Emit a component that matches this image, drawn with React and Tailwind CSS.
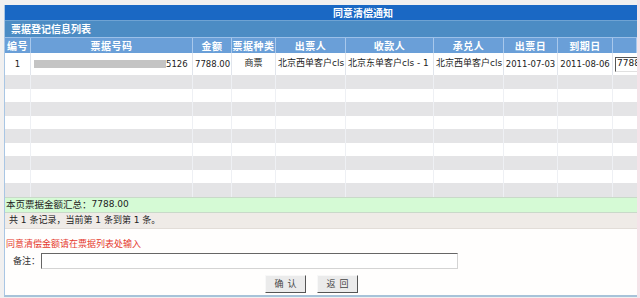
import React from "react";

const cols = "grid grid-cols-[26px_162px_39px_44px_70px_88px_70px_54px_55px_24px]";
const heads = ["编号", "票据号码", "金额", "票据种类", "出票人", "收款人", "承兑人", "出票日", "到期日", ""];

const App = () => {
  const emptyRows = Array.from({ length: 9 }, (_, i) => i);

  return (
    <div className="w-[640px] h-[298px] bg-[#f1f0f0] flex overflow-hidden font-['DejaVu_Sans','Noto_Sans_CJK_SC',sans-serif]">
      <div className="w-[4px]" />
      <div className="mt-[5px] w-[633px] h-[292px] flex flex-col bg-white border-l border-[#a9c6e4] border-b-2 border-b-[#a7c3d9]">
        <div className="h-[15px] bg-[#1a68c4] flex items-center pl-[328px] text-white text-[10px] font-bold font-['Noto_Sans_CJK_SC',sans-serif] leading-none">
          同意清偿通知
        </div>
        <div className="h-[17px] bg-[#4c8cc4] flex items-center pl-[6px] text-white text-[10px] font-bold font-['Noto_Sans_CJK_SC',sans-serif] leading-none border-t border-[#6fa3d3]">
          票据登记信息列表
        </div>
        <div className="overflow-hidden">
          <div className={`${cols} h-[16px] bg-[#6a9fd8] text-white text-[10px] font-bold font-['Noto_Sans_CJK_SC',sans-serif] border-t border-[#9cc0e8]`}>
            {heads.map((h, i) => (
              <div key={i} className="flex items-center justify-center border-r border-[#a8c8ec] leading-none tracking-[0.5px]">
                {h}
              </div>
            ))}
          </div>
          <div className={`${cols} h-[22px] bg-white text-[8.5px] text-[#222]`}>
            <div className="flex items-center justify-center border-r border-[#e1e5ec]">1</div>
            <div className="flex items-center pl-[3px] border-r border-[#e1e5ec]">
              <div className="w-[132px] h-[8px] bg-[#c4c4c4]" />
              <span>5126</span>
            </div>
            <div className="flex items-center pl-[2px] border-r border-[#e1e5ec]">7788.00</div>
            <div className="flex items-center justify-center border-r border-[#e1e5ec] text-[9px]">商票</div>
            <div className="flex items-center pl-[2px] border-r border-[#e1e5ec] text-[9px] whitespace-nowrap">北京西单客户cls</div>
            <div className="flex items-center pl-[2px] border-r border-[#e1e5ec] text-[9px] whitespace-nowrap">北京东单客户cls - 1</div>
            <div className="flex items-center pl-[2px] border-r border-[#e1e5ec] text-[9px] whitespace-nowrap">北京西单客户cls</div>
            <div className="flex items-center justify-center border-r border-[#e1e5ec]">2011-07-03</div>
            <div className="flex items-center justify-center border-r border-[#e1e5ec]">2011-08-06</div>
            <div className="flex items-center pl-[2px] overflow-hidden">
              <div className="w-[30px] h-[15px] border border-[#e0e0e0] border-t-[#555] border-l-[#555] bg-white flex items-center text-[9px] pl-[1px]">
                7788
              </div>
            </div>
          </div>
          {emptyRows.map((r) => (
            <div key={r} className={`${cols} h-[13.5px] ${r % 2 === 0 ? "bg-[#e4e4e6]" : "bg-white"}`}>
              {heads.map((_, i) => (
                <div key={i} className={i < 9 ? "border-r border-[#eef0f4]" : ""} />
              ))}
            </div>
          ))}
        </div>
        <div className="h-[16px] bg-[#d5fad5] border-t border-b border-[#c9d9c9] flex items-center pl-[1px] text-[9.5px] text-[#222] font-['Noto_Sans_CJK_SC',sans-serif] leading-none">
          本页票据金额汇总：<span className="font-['DejaVu_Sans',sans-serif] text-[9px]">7788.00</span>
        </div>
        <div className="h-[16px] bg-[#efebe7] border-b border-[#e2ddd8] flex items-center pl-[4px] text-[9px] text-[#222] leading-none whitespace-pre">
          共 1 条记录，当前第 1 条到第 1 条。
        </div>
        <div className="flex-1 flex flex-col bg-[#fffefd]">
          <div className="h-[21px] flex items-end pl-[1px] text-[9px] text-[#e53a2e] font-['Noto_Sans_CJK_SC',sans-serif] leading-none pb-[2px]">
            同意清偿金额请在票据列表处输入
          </div>
          <div className="mt-[3px] h-[16px] flex items-center">
            <span className="pl-[8px] w-[36px] text-[9px] text-[#333] font-['Noto_Sans_CJK_SC',sans-serif] leading-none">备注：</span>
            <div className="w-[417px] h-[16px] bg-white border border-[#d4d4d4] border-t-[#666] border-l-[#666]" />
          </div>
          <div className="mt-[6px] flex pl-[260px] gap-[11px]">
            <button className="w-[41px] h-[18px] bg-[#ebebeb] border border-[#f8f8f8] border-r-[#555] border-b-[#555] text-[9px] text-[#444] font-['Noto_Sans_CJK_SC',sans-serif] leading-none">
              确&nbsp;&nbsp;认
            </button>
            <button className="w-[41px] h-[18px] bg-[#ebebeb] border border-[#f8f8f8] border-r-[#555] border-b-[#555] text-[9px] text-[#444] font-['Noto_Sans_CJK_SC',sans-serif] leading-none">
              返&nbsp;&nbsp;回
            </button>
          </div>
        </div>
      </div>
      <div className="w-[3px] bg-[#f5e2e8]" />
    </div>
  );
};

export default App;
